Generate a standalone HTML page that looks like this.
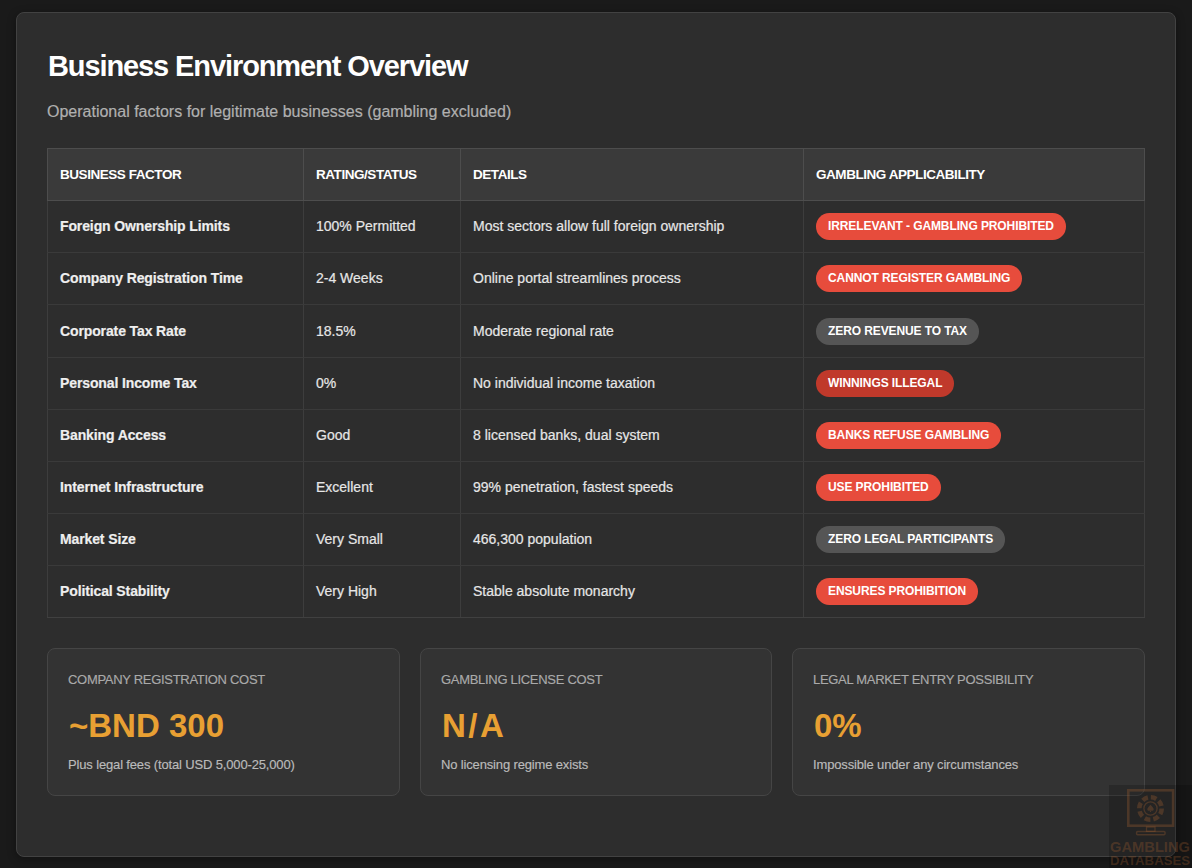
<!DOCTYPE html>
<html><head><meta charset="utf-8">
<style>
*{box-sizing:border-box;margin:0;padding:0}
html,body{width:1192px;height:868px;overflow:hidden;background:#1a1a1a;font-family:"Liberation Sans",sans-serif;position:relative}
.abs{position:absolute}
.wrap{position:absolute;left:16px;top:12px;width:1160px;height:845px;background:#2d2d2d;border:1px solid #424242;border-radius:8px;box-shadow:0 2px 8px rgba(0,0,0,0.35);}
.t{position:absolute;white-space:nowrap}
h2{position:absolute;left:48px;top:49px;font-size:29px;font-weight:bold;color:#fff;line-height:34px;white-space:nowrap;letter-spacing:-1.1px}
.sub{left:47px;top:101.5px;font-size:16px;color:#b0b0b0;line-height:20px;-webkit-text-stroke:0.2px #b0b0b0}
.hdr{position:absolute;left:47px;top:148px;width:1098px;height:53px;background:#3a3a3a;border:1px solid #4d4d4d;}
.hl{position:absolute;height:1px;background:#3a3a3a;left:47px;width:1098px}
.vl{position:absolute;width:1px;background:#3d3d3d}
.vh{position:absolute;width:1px;background:#4d4d4d;top:148px;height:53px}
.th{color:#fff;font-size:13.5px;font-weight:bold;letter-spacing:-0.45px;line-height:20px;top:165px}
.c{font-size:14px;color:#e6e6e6;line-height:20px;-webkit-text-stroke:0.2px #e6e6e6}
.f{font-weight:bold;color:#f0f0f0;letter-spacing:-0.12px}
.b{position:absolute;left:816px;color:#fff;font-size:12px;font-weight:bold;letter-spacing:-0.1px;padding:0 12px;height:27px;line-height:27px;border-radius:13.3px;white-space:nowrap}
.r{background:#e74c3c}.d{background:#c0392b}.g{background:#555}
.card{position:absolute;top:648px;height:148px;background:#333;border:1px solid #454545;border-radius:8px;}
.lab{position:absolute;left:20px;top:23px;font-size:13px;color:#aaa;letter-spacing:-0.3px;-webkit-text-stroke:0.15px #aaa;white-space:nowrap;line-height:16px}
.val{position:absolute;left:21px;top:58px;font-size:33px;font-weight:bold;color:#e8a033;white-space:nowrap;line-height:38px}
.note{position:absolute;left:20px;top:108px;font-size:13px;color:#bbb;letter-spacing:-0.15px;-webkit-text-stroke:0.15px #bbb;white-space:nowrap;line-height:16px}
</style></head><body>
<div class="wrap"></div>
<h2>Business Environment Overview</h2>
<div class="t sub">Operational factors for legitimate businesses (gambling excluded)</div>

<div class="hdr"></div>
<div class="vh" style="left:303px"></div><div class="vh" style="left:460px"></div><div class="vh" style="left:803px"></div>
<div class="vl" style="left:47px;top:201px;height:417px"></div>
<div class="vl" style="left:303px;top:201px;height:417px"></div>
<div class="vl" style="left:460px;top:201px;height:417px"></div>
<div class="vl" style="left:803px;top:201px;height:417px"></div>
<div class="vl" style="left:1144px;top:201px;height:417px"></div>
<div class="hl" style="top:252px"></div>
<div class="hl" style="top:304px"></div>
<div class="hl" style="top:357px"></div>
<div class="hl" style="top:409px"></div>
<div class="hl" style="top:461px"></div>
<div class="hl" style="top:513px"></div>
<div class="hl" style="top:565px"></div>
<div class="hl" style="top:617px;background:#404040"></div>

<div class="t th" style="left:60px">BUSINESS FACTOR</div>
<div class="t th" style="left:316px">RATING/STATUS</div>
<div class="t th" style="left:473px">DETAILS</div>
<div class="t th" style="left:816px">GAMBLING APPLICABILITY</div>

<div class="t c f" style="left:60px;top:216px">Foreign Ownership Limits</div>
<div class="t c" style="left:316px;top:216px">100% Permitted</div>
<div class="t c" style="left:473px;top:216px">Most sectors allow full foreign ownership</div>
<div class="b r" style="top:213px">IRRELEVANT - GAMBLING PROHIBITED</div>
<div class="t c f" style="left:60px;top:268px">Company Registration Time</div>
<div class="t c" style="left:316px;top:268px">2-4 Weeks</div>
<div class="t c" style="left:473px;top:268px">Online portal streamlines process</div>
<div class="b r" style="top:265px">CANNOT REGISTER GAMBLING</div>
<div class="t c f" style="left:60px;top:320.5px">Corporate Tax Rate</div>
<div class="t c" style="left:316px;top:320.5px">18.5%</div>
<div class="t c" style="left:473px;top:320.5px">Moderate regional rate</div>
<div class="b g" style="top:317.5px">ZERO REVENUE TO TAX</div>
<div class="t c f" style="left:60px;top:373px">Personal Income Tax</div>
<div class="t c" style="left:316px;top:373px">0%</div>
<div class="t c" style="left:473px;top:373px">No individual income taxation</div>
<div class="b d" style="top:370px">WINNINGS ILLEGAL</div>
<div class="t c f" style="left:60px;top:425px">Banking Access</div>
<div class="t c" style="left:316px;top:425px">Good</div>
<div class="t c" style="left:473px;top:425px">8 licensed banks, dual system</div>
<div class="b r" style="top:422px">BANKS REFUSE GAMBLING</div>
<div class="t c f" style="left:60px;top:477px">Internet Infrastructure</div>
<div class="t c" style="left:316px;top:477px">Excellent</div>
<div class="t c" style="left:473px;top:477px">99% penetration, fastest speeds</div>
<div class="b r" style="top:474px">USE PROHIBITED</div>
<div class="t c f" style="left:60px;top:529px">Market Size</div>
<div class="t c" style="left:316px;top:529px">Very Small</div>
<div class="t c" style="left:473px;top:529px">466,300 population</div>
<div class="b g" style="top:526px">ZERO LEGAL PARTICIPANTS</div>
<div class="t c f" style="left:60px;top:581px">Political Stability</div>
<div class="t c" style="left:316px;top:581px">Very High</div>
<div class="t c" style="left:473px;top:581px">Stable absolute monarchy</div>
<div class="b r" style="top:578px">ENSURES PROHIBITION</div>

<div class="card" style="left:47px;width:353px"><div class="lab">COMPANY REGISTRATION COST</div><div class="val">~BND 300</div><div class="note">Plus legal fees (total USD 5,000-25,000)</div></div>
<div class="card" style="left:420px;width:352px"><div class="lab">GAMBLING LICENSE COST</div><div class="val" style="letter-spacing:2.5px">N/A</div><div class="note">No licensing regime exists</div></div>
<div class="card" style="left:792px;width:353px"><div class="lab">LEGAL MARKET ENTRY POSSIBILITY</div><div class="val">0%</div><div class="note">Impossible under any circumstances</div></div>

<div class="abs" style="left:1109px;top:785px;width:83px;height:83px;background:rgba(0,0,0,0.18)"></div>
<svg class="abs" style="left:1100px;top:780px" width="92" height="88" viewBox="1100 780 92 88">
<g fill="none" stroke="rgba(170,98,50,0.3)">
<rect x="1128.3" y="790.3" width="44.8" height="35.4" stroke-width="2.6"/>
<circle cx="1150.5" cy="808.5" r="11.2" stroke-width="4.6" stroke-dasharray="5.8 3"/>
<circle cx="1150.5" cy="808.5" r="6.6" stroke-width="1.3"/>
<rect x="1146.5" y="827" width="8.5" height="4.3" stroke-width="1.3"/>
<rect x="1136.6" y="831.6" width="28.4" height="3.2" rx="1" stroke-width="1.5"/>
</g>
<path d="M1150.5 804.8c1.6 1.9 3.2 3 3.2 4.6a1.6 1.6 0 0 1-3 0.5l0.6 2.2h-1.6l0.6-2.2a1.6 1.6 0 0 1-3-0.5c0-1.6 1.6-2.7 3.2-4.6z" fill="rgba(170,98,50,0.3)"/>
<g fill="rgba(170,98,50,0.3)" font-family="Liberation Sans" font-weight="bold">
<text x="1110" y="851.5" font-size="15" textLength="80" lengthAdjust="spacingAndGlyphs">GAMBLING</text>
<text x="1110" y="864.5" font-size="13.5" textLength="80" lengthAdjust="spacingAndGlyphs">DATABASES</text>
</g>
</svg>
</body></html>
